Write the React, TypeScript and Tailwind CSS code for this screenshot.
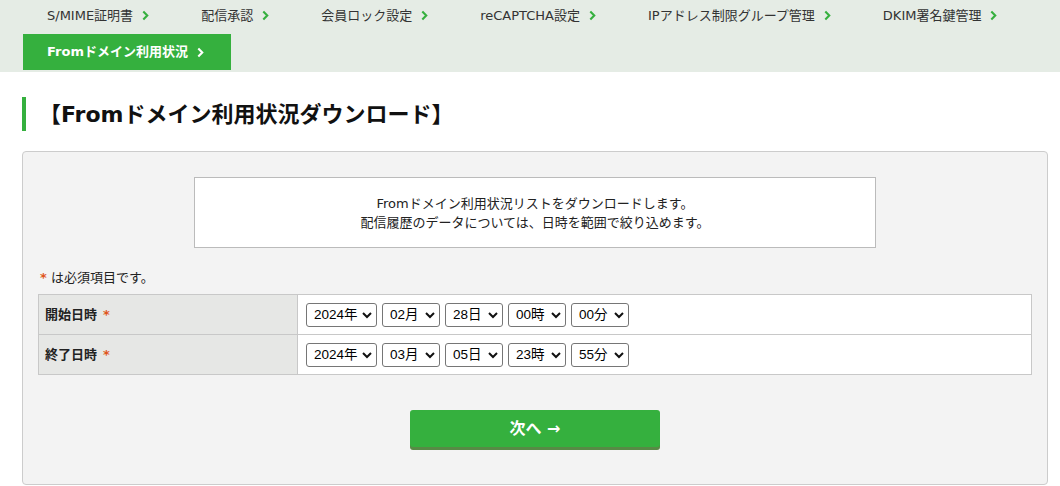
import React from 'react';

const navItems = ['S/MIME証明書', '配信承認', '会員ロック設定', 'reCAPTCHA設定', 'IPアドレス制限グループ管理', 'DKIM署名鍵管理'];

const Chevron = ({ className }: { className?: string }) => (
  <svg viewBox="0 0 8 12" className={className} fill="none" stroke="currentColor" strokeWidth="2.4">
    <polyline points="1.5,1.5 6,6 1.5,10.5" />
  </svg>
);

// select box with custom arrow
const DateSelect = ({ value, width }: { value: string; width: string }) => (
  <div className={`relative inline-block ${width}`}>
    <select
      defaultValue={value}
      className="h-6 w-full appearance-none rounded-[3px] border border-[#767676] bg-white pl-[7px] text-[13.5px] leading-none text-black outline-none"
      style={{ fontFamily: '"Liberation Sans", "Noto Sans CJK JP", sans-serif' }}
    >
      <option value={value}>{value}</option>
    </select>
    <svg viewBox="0 0 10 7" className="pointer-events-none absolute right-[5px] top-[9px] h-[7px] w-[10px]" fill="none" stroke="#111" strokeWidth="2">
      <polyline points="1,1 5,5 9,1" />
    </svg>
  </div>
);

const rows = [
  { label: '開始日時', values: ['2024年', '02月', '28日', '00時', '00分'] },
  { label: '終了日時', values: ['2024年', '03月', '05日', '23時', '55分'] },
];

const widths = ['w-[71px]', 'w-[58px]', 'w-[58px]', 'w-[58px]', 'w-[58px]'];

export default function App() {
  return (
    <div className="min-h-screen bg-white text-[#222]" style={{ fontFamily: '"DejaVu Sans", "Noto Sans CJK JP", sans-serif' }}>
      {/* top navigation */}
      <nav className="bg-[#e5ece5] pb-[2px] pl-[21px]">
        <ul className="flex h-[31px] items-center text-[13px] font-normal text-[#333]">
          {navItems.map((item) => (
            <li key={item} className="flex items-center px-[26px]">
              <span>{item}</span>
              <Chevron className="ml-[9px] h-[11px] w-[7px] text-[#35b03e]" />
            </li>
          ))}
        </ul>
        <div className="ml-[2px] mt-[3px] flex h-9 w-[208px] items-center bg-[#35b03e] px-6 text-[13px] font-bold text-white">
          <span>Fromドメイン利用状況</span>
          <Chevron className="ml-[9px] h-[11px] w-[7px]" />
        </div>
      </nav>

      <div className="ml-[22px] w-[1026px]">
        <h1 className="mt-[25px] flex h-[34px] items-center border-l-4 border-[#35b03e] pl-[13px] text-[22px] font-bold text-[#111]">
          【Fromドメイン利用状況ダウンロード】
        </h1>

        <div className="mt-[20px] rounded-[4px] border border-[#cccccc] bg-[#f3f3f3] px-[15px] pb-[37px] pt-[25px]">
          <div className="mx-auto flex h-[71px] w-[682px] flex-col items-center justify-center border border-[#bbbbbb] bg-white text-[13px] leading-[19px] text-[#222]">
            <p>Fromドメイン利用状況リストをダウンロードします。</p>
            <p>配信履歴のデータについては、日時を範囲で絞り込めます。</p>
          </div>

          <p className="mt-[21px] h-[18px] pl-[2px] text-[13px] leading-[18px]">
            <span className="font-bold text-[#e0561b]">*</span> は必須項目です。
          </p>

          <table className="mt-[7px] w-full border-collapse text-[13px]">
            <tbody>
              {rows.map((row) => (
                <tr key={row.label} className="h-10">
                  <th className="w-[259px] border border-[#c8c8c8] bg-[#e6e7e5] pl-[6px] text-left font-bold">
                    {row.label}
                    <span className="ml-[6px] text-[#e0561b]">*</span>
                  </th>
                  <td className="border border-[#c8c8c8] bg-white pl-2">
                    <div className="flex gap-[5px]">
                      {row.values.map((v, i) => (
                        <DateSelect key={i} value={v} width={widths[i]} />
                      ))}
                    </div>
                  </td>
                </tr>
              ))}
            </tbody>
          </table>

          <div className="mt-[35px] flex justify-center">
            <button className="h-[37px] w-[250px] rounded-[3px] bg-[#35b03e] text-[16px] font-bold text-white shadow-[0_3px_0_#578a45]">
              次へ →
            </button>
          </div>
        </div>
      </div>
    </div>
  );
}
